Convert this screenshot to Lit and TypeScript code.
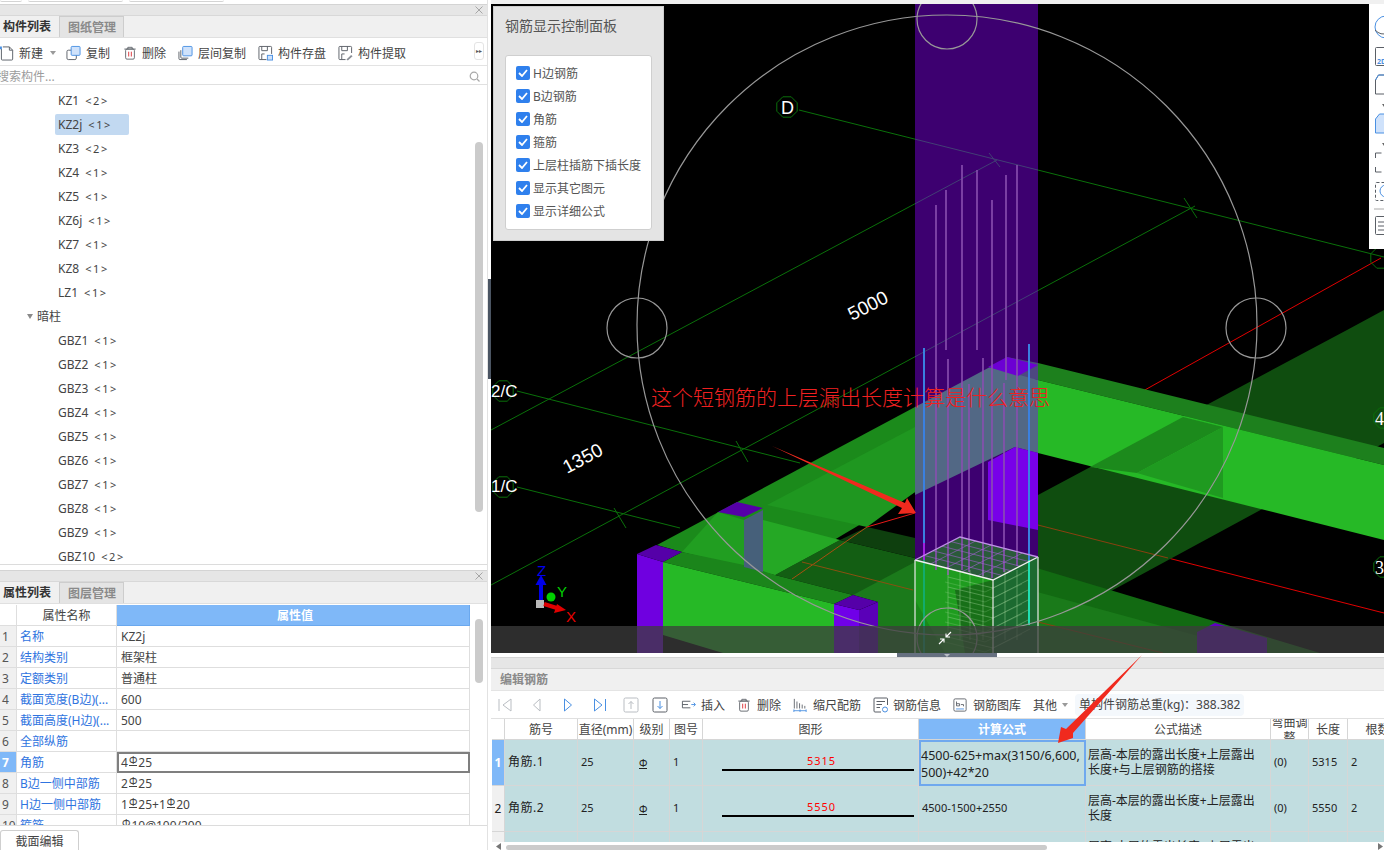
import { LitElement, html, css, svg } from 'lit';
import { customElement } from 'lit/decorators.js';

const UI_FONT = css`"Noto Sans", "Noto Sans CJK SC", sans-serif`;

// small outlined toolbar icons, all on a 16x16 box
const S = '#5a5f66';
const B = '#4a90e2';
const F = '#cfe2fb';
const icon = (body: unknown, w = 16, h = 16) =>
  html`<svg width=${w} height=${h} viewBox="0 0 16 16" fill="none" stroke=${S} stroke-width="1" style="flex:none">${body}</svg>`;

const icons: Record<string, unknown> = {
  create: icon(svg`<path d="M1.5 3.5V14.5a1 1 0 0 0 1 1H12.5a1 1 0 0 0 1-1V5L10 1.5H3"/><path d="M10 1.5V5h3.5"/><path d="M-1 1h3v3h-3z" fill=${B} stroke="none"/>`, 15),
  copy: icon(svg`<rect x="1" y="5" width="10" height="10" rx="1.5"/><rect x="5.5" y="1" width="9.5" height="9.5" rx="1" fill=${F} stroke=${B}/>`, 15),
  trash: icon(svg`<path d="M1.5 3.5h13M5.5 3.5V1.5h5v2"/><rect x="3" y="3.5" width="10" height="11.5" rx="1.5"/><path d="M6.5 6.5v5.5M9.5 6.5v5.5" stroke="#d8262c"/>`, 14),
  floorCopy: icon(svg`<path d="M1 6.5V14a1 1 0 0 0 1 1h7.5M3 5v7.5a1 1 0 0 0 1 1h7"/><rect x="5" y="1" width="10" height="10" rx="1" fill=${F} stroke=${B}/>`, 15),
  save: icon(svg`<path d="M14.5 9V2a1 1 0 0 0-1-1H2a1 1 0 0 0-1 1v12a1 1 0 0 0 1 1h7"/><path d="M4 1v4.5h6V1M4 15V9h3"/><rect x="10" y="10.5" width="5.5" height="5" fill=${F} stroke=${B}/>`, 15),
  extract: icon(svg`<path d="M14.5 8V2a1 1 0 0 0-1-1H2a1 1 0 0 0-1 1v12a1 1 0 0 0 1 1h6"/><path d="M4 1v4.5h6V1M4 15V9h3"/><path d="M9 15l5-5 1.5 1.5-5 4.5z" fill="#8a8f96" stroke="none"/>`, 15),
  first: icon(svg`<path d="M2 2v12M14 2L6 8l8 6z" stroke="#b9bdc2"/>`),
  prev: icon(svg`<path d="M11 2L4.5 8l6.5 6z" stroke="#b9bdc2"/>`),
  next: icon(svg`<path d="M4.5 2L11.5 8l-7 6z" stroke=${B}/>`),
  last: icon(svg`<path d="M2.5 2L10 8l-7.5 6zM13.5 2v12" stroke=${B}/>`),
  up: icon(svg`<rect x="1" y="1" width="14" height="14" rx="1.5" stroke="#b9bdc2"/><path d="M8 12V4.5M5.5 7L8 4.5 10.5 7" stroke="#b9bdc2"/>`),
  down: icon(svg`<rect x="1" y="1" width="14" height="14" rx="1.5"/><path d="M8 4v7.5M5.5 9L8 11.5 10.5 9" stroke=${B}/>`),
  insert: icon(svg`<path d="M10 4H1.5v7H10M1.5 7.5h6"/><path d="M11 7.5h4M13.5 5.5l2 2-2 2" stroke=${B}/>`, 15),
  ruler: icon(svg`<path d="M1.5 1v11M4.5 4v8M7.5 6v6M10.5 7.5v4.5M13.5 9v3"/><path d="M1 14.5h14M1 13v3M8 13v3M15 13v3" stroke=${B}/>`, 14),
  info: icon(svg`<path d="M14.5 8V2a1 1 0 0 0-1-1H2a1 1 0 0 0-1 1v12a1 1 0 0 0 1 1h6"/><path d="M3.5 4.5H12M3.5 7.5H9M3.5 10.5H7"/><circle cx="12" cy="12.5" r="2.5" stroke=${B}/>`),
  library: icon(svg`<rect x="1" y="1" width="14" height="14" rx="1.5"/><path d="M4 4v5h3.5V6.5H4M9 7.5h3v2"/><path d="M3.5 12.5h9" stroke=${B}/>`, 14),
};

const rebar = html`<span class="rb">Φ</span>`;

const sharedStyles = css`
  :host {
    display: block;
  }
  .head {
    height: 12px;
    box-sizing: border-box;
    background: #e6e6e6;
    border-top: 1px solid #d4d4d4;
    border-bottom: 1px solid #d8d8d8;
    display: flex;
    justify-content: flex-end;
    align-items: center;
    padding-right: 4px;
  }
  .tabs {
    display: flex;
    height: 22px;
    box-sizing: border-box;
    background: #f0f0f0;
    border-bottom: 1px solid #e0e0e0;
  }
  .tab {
    width: 59px;
    padding-left: 3px;
    box-sizing: border-box;
    font-weight: 700;
    line-height: 22px;
    color: #333;
    white-space: nowrap;
  }
  .tab.off {
    width: 65px;
    padding-left: 8px;
    background: #e4e4e4;
    color: #8a8a8a;
    border: 1px solid #cdcdcd;
    border-bottom: none;
    line-height: 21px;
  }
  .tool {
    display: flex;
    align-items: center;
    gap: 5px;
    white-space: nowrap;
    color: #444;
  }
  .caret {
    width: 0;
    height: 0;
    border: 3px solid transparent;
    border-top: 4px solid #9a9a9a;
    border-bottom: none;
  }
  .rb {
    display: inline-block;
    font-size: 10px;
    line-height: 9px;
    height: 9px;
    border-bottom: 1px solid currentColor;
    margin: 0 1px;
    vertical-align: 3px;
  }
  .thumb {
    position: absolute;
    width: 8px;
    background: #cbcbcb;
    border-radius: 4px;
  }
`;

const closeMark = html`<svg width="8" height="8" viewBox="0 0 8 8" stroke="#a6a6a6"><path d="M.5.5l7 7M7.5.5l-7 7"/></svg>`;

@customElement('tree-panel')
class TreePanel extends LitElement {
  static styles = [
    sharedStyles,
    css`
      .bar {
        height: 28px;
        box-sizing: border-box;
        padding-top: 2px;
        display: flex;
        align-items: center;
        gap: 12px;
        background: #fff;
        border-bottom: 1px solid #e3e3e3;
        position: relative;
      }
      .bar .new {
        gap: 4px;
        margin-right: -2px;
      }
      .bar .new .caret {
        margin-left: 3px;
      }
      .bar .bin {
        margin-left: 1px;
      }
      .more {
        position: absolute;
        left: 474px;
        top: 4px;
        width: 10px;
        height: 18px;
        box-sizing: border-box;
        border: 1px solid #e4e4e4;
        border-radius: 3px;
        font-size: 6px;
        line-height: 16px;
        text-align: center;
        color: #555;
      }
      .search {
        height: 19px;
        box-sizing: border-box;
        padding: 2px 7px 0 0;
        border-bottom: 1px solid #e0e0e0;
        display: flex;
        justify-content: space-between;
        align-items: center;
        color: #9c9c9c;
        background: #fff;
      }
      .search span {
        margin-left: -3px;
      }
      .tree {
        position: relative;
        height: 480px;
        overflow: hidden;
        padding-top: 3px;
        box-sizing: border-box;
        background: #fff;
        border-bottom: 1px solid #dcdcdc;
      }
      .row {
        height: 24px;
        display: flex;
        align-items: center;
        padding-left: 55px;
        color: #444;
      }
      .item {
        padding: 0 3px;
        height: 21px;
        line-height: 21px;
        min-width: 0;
        border-radius: 2px;
        white-space: nowrap;
      }
      .item.on {
        background: #c2d9f1;
        width: 68px;
      }
      .item i {
        font-style: normal;
        margin-left: 6px;
        letter-spacing: 1.6px;
        font-size: 11px;
      }
      .group {
        padding-left: 27px;
        gap: 4px;
      }
      .group b {
        width: 0;
        height: 0;
        border: 3.5px solid transparent;
        border-top: 5px solid #8a8a8a;
        border-bottom: none;
      }
      .group span {
        font-weight: 400;
      }
    `,
  ];

  items = [
    ['KZ1', 2], ['KZ2j', 1], ['KZ3', 2], ['KZ4', 1], ['KZ5', 1], ['KZ6j', 1], ['KZ7', 1], ['KZ8', 1], ['LZ1', 1],
  ];
  shear = [
    ['GBZ1', 1], ['GBZ2', 1], ['GBZ3', 1], ['GBZ4', 1], ['GBZ5', 1], ['GBZ6', 1], ['GBZ7', 1], ['GBZ8', 1], ['GBZ9', 1], ['GBZ10', 2],
  ];

  rowTpl(it: (string | number)[]) {
    return html`<div class="row">
      <div class="item ${it[0] === 'KZ2j' ? 'on' : ''}">${it[0]}<i>&lt;${it[1]}&gt;</i></div>
    </div>`;
  }

  render() {
    return html`
      <div class="head">${closeMark}</div>
      <div class="tabs"><div class="tab">构件列表</div><div class="tab off">图纸管理</div></div>
      <div class="bar">
        <div class="tool new">${icons.create}<span>新建</span><span class="caret"></span></div>
        <div class="tool">${icons.copy}<span>复制</span></div>
        <div class="tool bin">${icons.trash}<span>删除</span></div>
        <div class="tool">${icons.floorCopy}<span>层间复制</span></div>
        <div class="tool">${icons.save}<span>构件存盘</span></div>
        <div class="tool">${icons.extract}<span>构件提取</span></div>
        <div class="more">▸▸</div>
      </div>
      <div class="search">
        <span>搜索构件...</span>
        <svg width="11" height="11" viewBox="0 0 11 11" fill="none" stroke="#a8a8a8" stroke-width="1.2"><circle cx="5" cy="5" r="3.8"/><path d="M8 8l2.5 2.5"/></svg>
      </div>
      <div class="tree">
        ${this.items.map((it) => this.rowTpl(it))}
        <div class="row group"><b></b><span>暗柱</span></div>
        ${this.shear.map((it) => this.rowTpl(it))}
        <div class="thumb" style="left:475px;top:57px;height:370px"></div>
      </div>
    `;
  }
}

@customElement('prop-panel')
class PropPanel extends LitElement {
  static styles = [
    sharedStyles,
    css`
      .sheet {
        position: relative;
        height: 222px;
        box-sizing: border-box;
        padding-top: 1px;
        overflow: hidden;
        background: #fff;
        border-bottom: 1px solid #dcdcdc;
      }
      .grid {
        width: 470px;
        display: grid;
        grid-template-columns: 17px 100px 353px;
        grid-auto-rows: 21px;
      }
      .grid > div {
        box-sizing: border-box;
        border-right: 1px solid #dedede;
        border-bottom: 1px solid #dedede;
        line-height: 21px;
        white-space: nowrap;
        overflow: hidden;
        padding-left: 4px;
        color: #444;
      }
      .grid .hd {
        text-align: center;
        padding: 0;
      }
      .grid .val-hd {
        background: #7fb8f8;
        color: #fff;
        font-weight: 700;
        text-align: center;
        border-color: #6aa8ee;
      }
      .grid .num {
        background: #f0f0f0;
        padding: 0 0 0 2px;
        font-size: 12px;
        color: #555;
      }
      .grid .num.on {
        background: #7fb8f8;
        color: #fff;
        font-weight: 700;
      }
      .grid .name {
        color: #2f74e0;
        padding-left: 3px;
      }
      .grid .edit {
        border: 2px solid #7f7f7f;
        line-height: 17px;
        padding-left: 2px;
      }
      .foot {
        height: 24px;
        background: #fff;
        padding-top: 4px;
        box-sizing: border-box;
      }
      .foot div {
        width: 79px;
        height: 20px;
        box-sizing: border-box;
        border: 1px solid #cfcfcf;
        border-bottom: none;
        border-radius: 3px 3px 0 0;
        text-align: center;
        line-height: 21px;
        color: #444;
      }
    `,
  ];

  rows: [string, unknown][] = [
    ['名称', 'KZ2j'],
    ['结构类别', '框架柱'],
    ['定额类别', '普通柱'],
    ['截面宽度(B边)(...', '600'],
    ['截面高度(H边)(...', '500'],
    ['全部纵筋', ''],
    ['角筋', html`4${rebar}25`],
    ['B边一侧中部筋', html`2${rebar}25`],
    ['H边一侧中部筋', html`1${rebar}25+1${rebar}20`],
    ['箍筋', html`${rebar}10@100/200`],
  ];

  render() {
    return html`
      <div class="head">${closeMark}</div>
      <div class="tabs"><div class="tab">属性列表</div><div class="tab off">图层管理</div></div>
      <div class="sheet">
        <div class="grid">
          <div class="hd"></div>
          <div class="hd">属性名称</div>
          <div class="val-hd">属性值</div>
          ${this.rows.map(
            ([n, v], i) => html`
              <div class="num ${i === 6 ? 'on' : ''}">${i + 1}</div>
              <div class="name">${n}</div>
              <div class="${i === 6 ? 'edit' : ''}">${v}</div>
            `,
          )}
        </div>
        <div class="thumb" style="left:475px;top:15px;height:64px"></div>
      </div>
      <div class="foot"><div>截面编辑</div></div>
    `;
  }
}

const hexAt = (cx: number, cy: number, r = 11) => {
  const pts = [];
  for (let i = 0; i < 8; i++) {
    const a = (i * Math.PI) / 4 + Math.PI / 8;
    pts.push(`${(cx + r * Math.cos(a)).toFixed(1)},${(cy + r * Math.sin(a)).toFixed(1)}`);
  }
  return pts.join(' ');
};

const cageLines = () => {
  const out: unknown[] = [];
  // stirrups wrap the inner bars, so they sit a bit inside the white box
  for (let i = 0; i < 7; i++) {
    const y = 585 + i * 10;
    out.push(svg`<path d="M948 ${y - 8}L993 ${y + 3}L1030 ${y - 16}" stroke="#a8d8a0" stroke-opacity=".38"/>`);
    out.push(svg`<path d="M945 ${y - 3}L985 ${y + 7}L1022 ${y - 11}" stroke="#a8d8a0" stroke-opacity=".24"/>`);
  }
  for (const x of [948, 960, 970, 983, 1005, 1017]) {
    out.push(svg`<path d="M${x} 570V640" stroke="#a8d8a0" stroke-opacity=".28" stroke-width="1.5"/>`);
  }
  // top face
  for (let i = 1; i < 5; i++) {
    out.push(svg`<path d="M${915 + i * 9} ${560 - i * 4.6}L${993 + i * 9} ${580 - i * 4.6}" stroke="#a060d0" stroke-opacity=".6"/>`);
    out.push(svg`<path d="M${915 + i * 15.6} ${560 + i * 4}L${960 + i * 15.6} ${537 + i * 4}" stroke="#a060d0" stroke-opacity=".6"/>`);
  }
  return out;
};

// [x, top, bottom]
const bars: number[][] = [
  [936, 205, 570], [948, 359, 575], [946, 190, 350], [962, 165, 570], [969, 384, 572], [983, 358, 576],
  [992, 200, 578], [1004, 383, 572], [1006, 175, 380], [1017, 165, 566], [977, 170, 350],
];

@customElement('view-port')
class ViewPort extends LitElement {
  static styles = [
    sharedStyles,
    css`
      :host {
        position: relative;
        height: 649px;
        background: #000;
        overflow: hidden;
      }
      svg.scene {
        display: block;
      }
      .num {
        font-family: 'Liberation Sans', sans-serif;
        fill: #fff;
      }
      .board {
        position: absolute;
        left: 2px;
        top: 2px;
        width: 171px;
        height: 235px;
        box-sizing: border-box;
        background: #e4e4e4;
        border: 1px solid #cecece;
        padding: 9px 11px 0;
      }
      .board h4 {
        margin: 0 0 19px;
        font-size: 14px;
        font-weight: 400;
        line-height: 20px;
        color: #555;
      }
      .box {
        height: 175px;
        box-sizing: border-box;
        background: #fff;
        border: 1px solid #cfcfcf;
        border-radius: 3px;
        padding: 8px 0 0 10px;
        display: flex;
        flex-direction: column;
        gap: 5px;
      }
      .box label {
        display: flex;
        align-items: center;
        gap: 3px;
        height: 18px;
        color: #555;
        white-space: nowrap;
      }
      .check {
        width: 14px;
        height: 14px;
        border-radius: 2px;
        background: #2f80ed;
        display: flex;
        align-items: center;
        justify-content: center;
      }
      .rail {
        position: absolute;
        left: 878px;
        top: 0;
        width: 15px;
        height: 245px;
        background: #fff;
        overflow: hidden;
      }
      .shrink {
        position: absolute;
        left: 447px;
        top: 627px;
      }
    `,
  ];

  labels = ['H边钢筋', 'B边钢筋', '角筋', '箍筋', '上层柱插筋下插长度', '显示其它图元', '显示详细公式'];

  render() {
    return html`
      <svg class="scene" width="893" height="649" viewBox="491 4 893 649" fill="none">
        <!-- grid lines under the beams -->
        <g stroke="#0a700a">
          <path d="M799 110L1384 257"/>
          <path d="M491 430L997 160"/>
          <path d="M491 585L1195 206"/>
          <path d="M517 391L800 463"/>
          <path d="M517 487L680 528"/>
          <path d="M989 153L1000 167M1184 198L1197 218M736 441L748 462M614 508L626 528"/>
        </g>
        <path d="M1143 391L1381 258" stroke="#e00000"/>
        <path d="M1168 558L1384 613" stroke="#e00000"/>

        <!-- NE running beam behind the column -->
        <polygon points="1038,495 1347,330 1384,310 1384,443 1113,590 1038,630" fill="#0f4d0f"/>
        <polygon points="775,575 840,540 915,558 915,590 853,595" fill="#135e13"/>
        <polygon points="867,527 915,538 915,558 840,540" fill="#0e3f0e"/>
        <polygon points="853,595 915,562 915,653 878,653 878,602" fill="#1b7a1b"/>

        <!-- EW bright beam -->
        <polygon points="1007,357 1038,363 1384,448 1384,465 1038,380 1018,376" fill="#1d801d"/>
        <polygon points="1038,380 1384,465 1384,540 1038,453" fill="#26b926"/>
        <polygon points="1090,467 1183,417 1223,427 1137,473" fill="#1c8a1c"/>
        <polygon points="1137,473 1223,427 1223,498" fill="#1f9a20"/>

        <!-- the same beams seen through the column -->
        <polygon points="915,407 990,367 1038,380 1038,453 1015,447 915,495" fill="#26b926"/>

        <!-- lower EW beam on the right -->
        <polygon points="1030,566 1320,653 1030,653" fill="#126a12"/>
        <polygon points="1030,590 1260,653 1030,653" fill="#1a7a1a"/>

        <!-- near beams -->
        <polygon points="657,545 915,407 915,492 775,575 682,552" fill="#1b8a1b"/>
        <polygon points="767,505 915,427 915,492 867,527" fill="#1f9720"/>
        <polygon points="763,520 840,540 775,575 763,572" fill="#25a825"/>
        <polygon points="682,552 718,512 744,520 744,567" fill="#219e21"/>
        <polygon points="682,552 744,565 775,575 853,595 834,604 663,562" fill="#1b851b"/>
        <polygon points="663,562 834,604 834,653 723,653 663,635" fill="#26b926"/>

        <!-- axis lines that show over the dark beams -->
        <path d="M792 579L867 527" stroke="#a85010"/>
        <path d="M867 527L915 513" stroke="#e81818"/>
        <path d="M802 562L913 590" stroke="#8a5010"/>
        <path d="M1030 523L1168 558M1030 620L1163 653" stroke="#8a4010"/>

        <!-- stub columns -->
        <polygon points="637,554 663,562 663,653 637,653" fill="#6f00e0"/>
        <polygon points="637,554 656,545 682,552 663,562" fill="#5500a8"/>
        <polygon points="744,520 763,510 763,572 744,567" fill="#46607a"/>
        <polygon points="718,512 737,502 763,508 744,517" fill="#5500a8"/>
        <polygon points="834,604 859,610 859,653 834,653" fill="#7000e8"/>
        <polygon points="859,610 878,602 878,653 859,653" fill="#5a00b8"/>
        <polygon points="834,604 853,595 878,602 859,610" fill="#5500a8"/>
        <polygon points="1197,632 1215,623 1267,638 1267,653 1197,653" fill="#6000c0"/>

        <!-- solid stub inside the column -->
        <polygon points="988,367 1007,357 1038,365 1018,376" fill="#5500b0"/>
        <polygon points="988,462 1015,447 1038,453 1038,530 988,520" fill="#6a00d8"/>

        <!-- cage footing -->
        <polygon points="915,560 993,580 993,653 915,653" fill="#1f9c1f"/>
        <polygon points="915,600 945,653 915,653" fill="#1a8a1a"/>
        <polygon points="955,590 993,580 993,653 965,653" fill="#187018"/>
        <polygon points="993,580 1038,557 1038,653 993,653" fill="#1c6a30"/>
        <polygon points="915,560 960,537 1038,557 993,580" fill="#2a5a3a"/>

        <!-- translucent tall column -->
        <polygon points="915,4 1038,4 1038,557 960,537 915,560" fill="#8b00ff" fill-opacity=".44"/>

        <g stroke="#8a4fb0" stroke-width="1.6">
          ${bars.map(([x, t, b]) => svg`<path d="M${x} ${t}V${b}"/>`)}
        </g>
        ${cageLines()}
        <path d="M924 348V543" stroke="#3a80e0" stroke-width="2"/>
        <path d="M924 543V560" stroke="#a020e0" stroke-width="2"/>
        <path d="M924 560V653" stroke="#10b080" stroke-width="2" stroke-opacity=".8"/>
        <path d="M1029 344V560" stroke="#3a80e0" stroke-width="2"/>
        <path d="M1029 560V625" stroke="#20e0b0" stroke-width="2"/>
        <path d="M915 560V653M993 580V653M1038 557V653" stroke="#e8e8e8" stroke-width="1.2"/>
        <path d="M915 560L993 580L1038 557" stroke="#f2f2f2" stroke-width="1.3"/>
        <path d="M915 560L960 537L1038 557" stroke="#c090e8" stroke-width="1.3"/>

        <!-- dimension circles -->
        <g stroke="#989898" stroke-width="1.2">
          <circle cx="947" cy="325" r="310"/>
          <circle cx="947" cy="19" r="30"/>
          <circle cx="637" cy="328" r="30"/>
          <circle cx="1256" cy="328" r="30"/>
          <circle cx="947" cy="638" r="30"/>
        </g>

        <!-- axis bubbles -->
        <g stroke="#0a700a">
          <polygon points=${hexAt(787, 107)}/>
          <polygon points=${hexAt(503, 391)}/>
          <polygon points=${hexAt(503, 487)}/>
          <polygon points=${hexAt(1381, 258)}/>
          <polygon points=${hexAt(1384, 418)}/>
          <polygon points=${hexAt(1384, 567)}/>
        </g>
        <text class="num" x="781" y="114" font-size="18">D</text>
        <text class="num" x="491" y="397" font-size="17">2/C</text>
        <text class="num" x="491" y="492" font-size="17">1/C</text>
        <text x="1375" y="425" font-size="18" fill="#fff" font-family="Liberation Serif, serif">4</text>
        <text x="1375" y="574" font-size="18" fill="#fff" font-family="Liberation Serif, serif">3</text>
        <text class="num" font-size="19" transform="translate(852 321) rotate(-27)">5000</text>
        <text class="num" font-size="19" transform="translate(567 474) rotate(-28)">1350</text>

        <!-- axis gizmo -->
        <rect x="536" y="600" width="8" height="8" fill="#b8b8b8"/>
        <path d="M541 600V579" stroke="#0000e8" stroke-width="4"/>
        <path d="M541 575l5.5 10h-11z" fill="#0000e8"/>
        <circle cx="551" cy="597" r="4.5" fill="#00d000"/>
        <path d="M544 604l16 5" stroke="#e00000" stroke-width="4"/>
        <path d="M566 610l-12 3 3-9z" fill="#e00000"/>
        <text class="num" style="fill:#0000f0" x="537" y="576" font-size="15">Z</text>
        <text class="num" style="fill:#00d000" x="557" y="597" font-size="15">Y</text>
        <text class="num" style="fill:#e80000" x="566" y="622" font-size="15">X</text>

        <!-- status strip -->
        <rect x="491" y="626" width="893" height="27" fill="#3d3d3d" fill-opacity=".74"/>
      </svg>
      <div class="board">
        <h4>钢筋显示控制面板</h4>
        <div class="box">
          ${this.labels.map(
            (l) => html`<label>
              <span class="check"><svg width="10" height="8" viewBox="0 0 10 8" fill="none" stroke="#fff" stroke-width="1.8"><path d="M1 4l3 3 5-6"/></svg></span>
              ${l}
            </label>`,
          )}
        </div>
      </div>
      <div class="rail">
        <svg width="15" height="245" viewBox="1369 4 15 245" fill="none" stroke=${S}>
          <circle cx="1386" cy="27" r="11" stroke=${B}/>
          <path d="M1375 30q6 6 12 3" stroke=${S}/>
          <rect x="1375.5" y="47.5" width="16" height="18" rx="1"/>
          <text x="1377" y="64" font-size="7" font-weight="700" fill=${B} stroke="none">2D</text>
          <path d="M1375.5 94V80l3-5h12v19z"/>
          <path d="M1375.5 80l3-5h12" stroke=${B}/>
          <path d="M1382 104h4l-2 3z" fill="#666" stroke="none"/>
          <path d="M1375.5 133V119l4-5h12v19z" fill=${F} stroke=${B}/>
          <path d="M1382 143h4l-2 3z" fill="#666" stroke="none"/>
          <path d="M1375.5 158v-5h6M1375.5 167v5h6"/>
          <rect x="1375.5" y="182.5" width="16" height="18" rx="1" stroke-dasharray="3 2"/>
          <circle cx="1386" cy="191" r="6" stroke=${B}/>
          <path d="M1374 209h10" stroke="#aaa"/>
          <rect x="1375.5" y="216.5" width="16" height="18" rx="1"/>
          <path d="M1378 222h8M1378 226h8M1378 230h8"/>
        </svg>
      </div>
      <svg class="shrink" width="14" height="14" viewBox="0 0 14 14" fill="none" stroke="#fff" stroke-width="1.1">
        <path d="M13 1L8 6M8 2.5V6h4M1 13l5-5M6 11.5V8H2"/>
      </svg>
    `;
  }
}

const DESC = '层高-本层的露出长度+上层露出';

type SteelRow = {
  id: string;
  len: string;
  formula: unknown;
  desc: unknown;
};

@customElement('rebar-editor')
class RebarEditor extends LitElement {
  static styles = [
    sharedStyles,
    css`
      .title {
        height: 22px;
        box-sizing: border-box;
        background: #f0f0f0;
        border-bottom: 1px solid #e4e4e4;
        color: #8a8a8a;
        font-weight: 700;
        line-height: 21px;
        padding-left: 9px;
      }
      .bar {
        height: 28px;
        box-sizing: border-box;
        display: flex;
        align-items: center;
        gap: 12px;
        border-bottom: 1px solid #e0e0e0;
        background: #fff;
      }
      .bar .tool {
        gap: 6px;
      }
      .bar .tool.tight {
        gap: 4px;
      }
      .bar .tool.caretted {
        gap: 5px;
      }
      .nav {
        display: flex;
        gap: 15.5px;
        margin: 0 1.5px 0 6px;
      }
      .nav svg:last-child {
        margin-left: -3px;
      }
      .weight {
        margin-left: -5px;
        height: 22px;
        padding: 0 4px;
        background: #f4f8fc;
        border-radius: 4px;
        line-height: 22px;
        color: #444;
        white-space: nowrap;
      }
      .sheet {
        height: 123px;
        overflow: hidden;
        background: #fff;
      }
      .grid {
        display: grid;
        grid-template-columns: 13px 73px 56px 36px 33px 216px 167px 185px 38px 39px 60px;
        grid-template-rows: 21px 46px 46px 46px;
        margin-left: 1px;
      }
      .grid > div {
        box-sizing: border-box;
        border-right: 1px solid #d6d6d6;
        border-bottom: 1px solid #d6d6d6;
        overflow: hidden;
        color: #222;
      }
      .hd {
        background: #fff;
        color: #444 !important;
        text-align: center;
        line-height: 21px;
        white-space: nowrap;
      }
      .hd.wrap {
        white-space: normal;
        line-height: 15px;
        margin-top: -4px;
        height: 25px;
        font-size: 12px;
      }
      .hd.on {
        background: #7fb8f8;
        color: #fff !important;
        font-weight: 700;
      }
      .rowno {
        background: #f0f0f0;
        color: #444;
        line-height: 46px;
        text-align: center;
        font-size: 12px;
      }
      .rowno.on {
        background: #7fb8f8;
        color: #fff;
        font-weight: 700;
      }
      .cell {
        background: #c1dde0;
        font-size: 11px;
        line-height: 15px;
        padding: 14px 3px 0;
        white-space: nowrap;
      }
      .cell .rb {
        vertical-align: -1px;
        margin-left: 2px;
      }
      .cell.id {
        font-size: 12px;
        letter-spacing: 0.5px;
      }
      .cell.text {
        font-size: 12px;
        line-height: 15px;
        padding: 7px 2px 0;
        white-space: normal;
      }
      .cell.sel {
        border: 2px solid #6fa8ee;
        padding: 5px 0 0 0;
        font-size: 12.5px;
        line-height: 17px;
        white-space: nowrap;
      }
      .shape {
        background: #c1dde0;
        padding: 13px 4px 0 19px;
      }
      .shape span {
        display: block;
        text-align: center;
        padding-left: 7px;
        color: #f00;
        line-height: 15px;
        font-size: 11px;
        letter-spacing: 1px;
      }
      .shape i {
        display: block;
        height: 2px;
        margin-top: 1px;
        background: #000;
      }
      .track {
        position: relative;
        height: 8px;
        background: #fff;
      }
      .track .thumb {
        left: 15px;
        top: 3px;
        width: 541px;
        height: 5px;
      }
      .track svg {
        position: absolute;
        top: 1px;
      }
      .track .back {
        left: 5px;
      }
      .track .fwd {
        left: 887px;
      }
    `,
  ];

  rows: SteelRow[] = [
    {
      id: '角筋.1',
      len: '5315',
      formula: html`4500-625+max(3150/6,600,<br />500)+42*20`,
      desc: html`${DESC}<br />长度+与上层钢筋的搭接`,
    },
    { id: '角筋.2', len: '5550', formula: '4500-1500+2550', desc: html`${DESC}<br />长度` },
  ];

  render() {
    return html`
      <div class="head"></div>
      <div class="title">编辑钢筋</div>
      <div class="bar">
        <div class="nav">${icons.first}${icons.prev}${icons.next}${icons.last}${icons.up}${icons.down}</div>
        <div class="tool caretted">${icons.insert}<span>插入</span></div>
        <div class="tool">${icons.trash}<span>删除</span></div>
        <div class="tool">${icons.ruler}<span>缩尺配筋</span></div>
        <div class="tool tight">${icons.info}<span>钢筋信息</span></div>
        <div class="tool">${icons.library}<span>钢筋图库</span></div>
        <div class="tool caretted"><span>其他</span><span class="caret"></span></div>
        <div class="weight">单构件钢筋总重(kg)：388.382</div>
      </div>
      <div class="sheet">
        <div class="grid">
          <div class="hd"></div>
          <div class="hd">筋号</div>
          <div class="hd">直径(mm)</div>
          <div class="hd">级别</div>
          <div class="hd">图号</div>
          <div class="hd">图形</div>
          <div class="hd on">计算公式</div>
          <div class="hd">公式描述</div>
          <div class="hd wrap">弯曲调整</div>
          <div class="hd">长度</div>
          <div class="hd">根数</div>
          ${this.rows.map(
            (r, i) => html`
              <div class="rowno ${i === 0 ? 'on' : ''}">${i + 1}</div>
              <div class="cell id">${r.id}</div>
              <div class="cell">25</div>
              <div class="cell">${rebar}</div>
              <div class="cell">1</div>
              <div class="shape"><span>${r.len}</span><i></i></div>
              <div class="cell ${i === 0 ? 'sel' : ''}">${r.formula}</div>
              <div class="cell text">${r.desc}</div>
              <div class="cell">(0)</div>
              <div class="cell">${r.len}</div>
              <div class="cell">2</div>
            `,
          )}
          <div class="rowno"></div>
          <div class="cell"></div>
          <div class="cell"></div>
          <div class="cell"></div>
          <div class="cell"></div>
          <div class="cell"></div>
          <div class="cell"></div>
          <div class="cell text">${DESC}</div>
          <div class="cell"></div>
          <div class="cell"></div>
          <div class="cell"></div>
        </div>
      </div>
      <div class="track">
        <svg class="back" width="5" height="7" viewBox="0 0 5 7"><path d="M5 0v7L0 3.5z" fill="#777"/></svg>
        <div class="thumb"></div>
        <svg class="fwd" width="5" height="7" viewBox="0 0 5 7"><path d="M0 0v7l5-3.5z" fill="#777"/></svg>
      </div>
    `;
  }
}

@customElement('app-root')
export class AppRoot extends LitElement {
  static styles = css`
    :host {
      display: flex;
      position: relative;
      width: 1384px;
      height: 850px;
      overflow: hidden;
      background: #fff;
      font-family: ${UI_FONT};
      font-size: 12px;
    }
    .left {
      width: 487px;
      flex: none;
      border-right: 1px solid #e2e2e2;
      box-sizing: content-box;
    }
    .strip {
      height: 4px;
      display: flex;
      gap: 6px;
      background: #fff;
    }
    .strip i {
      width: 95px;
      height: 1px;
      border-bottom: 1px solid #d4d4d4;
      border-radius: 0 0 3px 3px;
    }
    .strip i:first-child {
      width: 22px;
    }
    .gap {
      height: 5px;
      background: #fff;
    }
    .split {
      width: 3px;
      flex: none;
      position: relative;
      background: #fff;
    }
    .split b {
      position: absolute;
      left: 0;
      top: 279px;
      width: 3px;
      height: 100px;
      background: #4b5563;
    }
    .right {
      flex: 1;
      min-width: 0;
    }
    .topline {
      height: 4px;
      background: #f0f0f0;
    }
    .handle {
      height: 4px;
      background: #fff;
      position: relative;
    }
    .handle b {
      position: absolute;
      left: 406px;
      top: 0;
      width: 100px;
      height: 4px;
      background: #667080;
    }
    .handle u {
      position: absolute;
      left: 453px;
      top: 1px;
      border: 3px solid transparent;
      border-top: 3px solid #b8bcc4;
      border-bottom: none;
    }
    .over {
      position: absolute;
      left: 0;
      top: 0;
      pointer-events: none;
    }
    .over text {
      font-family: ${UI_FONT};
      font-weight: 300;
    }
  `;

  render() {
    return html`
      <div class="left">
        <div class="strip"><i></i><i></i><i></i></div>
        <tree-panel></tree-panel>
        <div class="gap"></div>
        <prop-panel></prop-panel>
      </div>
      <div class="split"><b></b></div>
      <div class="right">
        <div class="topline"></div>
        <view-port></view-port>
        <div class="handle"><b></b><u></u></div>
        <rebar-editor></rebar-editor>
      </div>
      <svg class="over" width="1384" height="850" viewBox="0 0 1384 850">
        <text x="651" y="405" font-size="21" fill="#f02020">这个短钢筋的上层漏出长度计算是什么意思</text>
        <polygon points="772,446 905,503 907,498 916,513 898,514 902,508" fill="#f02a1e"/>
        <polygon points="1142,655 1073,733 1073,738 1058,743 1061,727 1066,729" fill="#f02a1e"/>
      </svg>
    `;
  }
}
